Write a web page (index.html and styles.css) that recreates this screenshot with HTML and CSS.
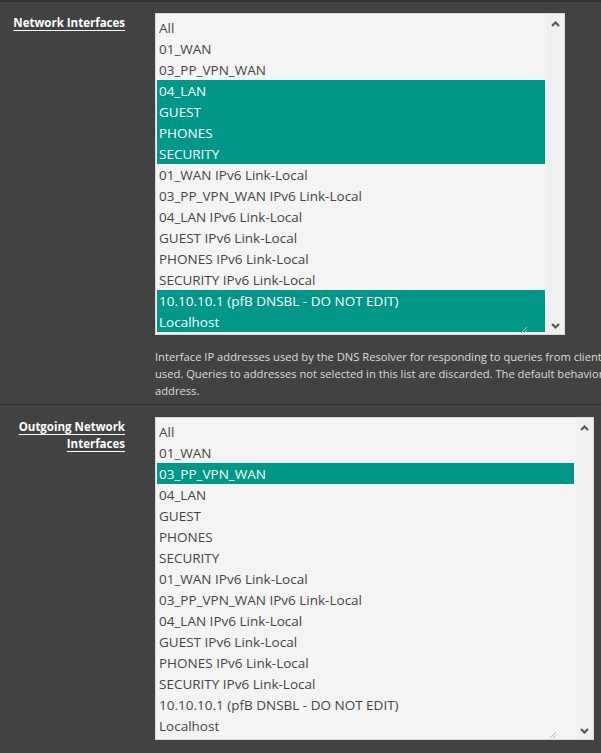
FILE: index.html
```html
<!DOCTYPE html>
<html>
<head>
<meta charset="utf-8">
<link rel="stylesheet" href="styles.css">
</head>
<body>
<div class="page">
  <div class="row row-first">
    <div class="label"><span class="label-text">Network Interfaces</span></div>
    <div class="content">
      <div class="listbox box-a">
        <div class="options">
          <div class="opt">All</div>
          <div class="opt">01_WAN</div>
          <div class="opt">03_PP_VPN_WAN</div>
          <div class="opt sel">04_LAN</div>
          <div class="opt sel">GUEST</div>
          <div class="opt sel">PHONES</div>
          <div class="opt sel">SECURITY</div>
          <div class="opt">01_WAN IPv6 Link-Local</div>
          <div class="opt">03_PP_VPN_WAN IPv6 Link-Local</div>
          <div class="opt">04_LAN IPv6 Link-Local</div>
          <div class="opt">GUEST IPv6 Link-Local</div>
          <div class="opt">PHONES IPv6 Link-Local</div>
          <div class="opt">SECURITY IPv6 Link-Local</div>
          <div class="opt sel">10.10.10.1 (pfB DNSBL - DO NOT EDIT)</div>
          <div class="opt sel">Localhost</div>
        </div>
        <div class="scrollbar">
          <svg class="arrow" width="9" height="6" viewBox="0 0 9 6"><path d="M1 5 L4.5 1.5 L8 5" fill="none" stroke="#555555" stroke-width="2"/></svg>
          <svg class="arrow" width="9" height="6" viewBox="0 0 9 6"><path d="M1 1 L4.5 4.5 L8 1" fill="none" stroke="#555555" stroke-width="2"/></svg>
        </div>
        <svg class="grip" width="8" height="8" viewBox="0 0 8 8"><path d="M7 1 L1 7 M7 4 L4 7 M7 6.5 L6.5 7" stroke="#b8b8b8" stroke-width="1"/></svg>
      </div>
      <div class="help">Interface IP addresses used by the DNS Resolver for responding to queries from clients. If an interface has both IPv4 and IPv6 IPs, both are<br>used. Queries to addresses not selected in this list are discarded. The default behavior is to respond to queries on every available IPv4 and IPv6<br>address.</div>
    </div>
  </div>
  <div class="row row-second">
    <div class="label"><span class="label-text">Outgoing Network</span><br><span class="label-text">Interfaces</span></div>
    <div class="content">
      <div class="listbox box-b">
        <div class="options">
          <div class="opt">All</div>
          <div class="opt">01_WAN</div>
          <div class="opt sel">03_PP_VPN_WAN</div>
          <div class="opt">04_LAN</div>
          <div class="opt">GUEST</div>
          <div class="opt">PHONES</div>
          <div class="opt">SECURITY</div>
          <div class="opt">01_WAN IPv6 Link-Local</div>
          <div class="opt">03_PP_VPN_WAN IPv6 Link-Local</div>
          <div class="opt">04_LAN IPv6 Link-Local</div>
          <div class="opt">GUEST IPv6 Link-Local</div>
          <div class="opt">PHONES IPv6 Link-Local</div>
          <div class="opt">SECURITY IPv6 Link-Local</div>
          <div class="opt">10.10.10.1 (pfB DNSBL - DO NOT EDIT)</div>
          <div class="opt">Localhost</div>
        </div>
        <div class="scrollbar">
          <svg class="arrow" width="9" height="6" viewBox="0 0 9 6"><path d="M1 5 L4.5 1.5 L8 5" fill="none" stroke="#555555" stroke-width="2"/></svg>
          <svg class="arrow" width="9" height="6" viewBox="0 0 9 6"><path d="M1 1 L4.5 4.5 L8 1" fill="none" stroke="#555555" stroke-width="2"/></svg>
        </div>
        <svg class="grip" width="8" height="8" viewBox="0 0 8 8"><path d="M7 1 L1 7 M7 4 L4 7 M7 6.5 L6.5 7" stroke="#b8b8b8" stroke-width="1"/></svg>
      </div>
    </div>
  </div>
</div>
</body>
</html>
```

FILE: styles.css
```css
html, body {
  margin: 0;
  padding: 0;
  overflow: hidden;
  background: #424242;
}
body {
  font-family: "Open Sans", "Noto Sans", sans-serif;
  width: 601px;
  height: 753px;
}
.page {
  border-top: 1px solid #353535;
}
.row {
  display: flex;
  gap: 30px;
  border-top: 1px solid #2f2f2f;
}
.row-first {
  padding: 11px 0 5px 0;
}
.row-second {
  padding: 12px 0 0 0;
}
.label {
  width: 125px;
  flex: none;
  text-align: right;
  font-size: 11.5px;
  font-weight: 700;
  line-height: 17px;
  color: #ffffff;
  padding-top: 1px;
}
.label-text {
  text-decoration: underline;
  text-underline-offset: 3px;
}
.content {
  flex: none;
  white-space: nowrap;
}
.listbox {
  position: relative;
  display: flex;
  background: #f4f4f4;
  border: 1px solid #d8d8d8;
  height: 320px;
}
.box-a { width: 408px; }
.box-b { width: 437px; height: 321px; }
.options {
  flex: 1;
  padding: 3px 1px 0 1px;
  overflow: hidden;
}
.opt {
  height: 21px;
  line-height: 22px;
  font-size: 13.5px;
  color: #444444;
  padding-left: 2px;
}
.opt.sel {
  background: #009688;
  color: #ffffff;
}
.scrollbar {
  width: 17px;
  flex: none;
  margin-left: 1px;
  background: #f0f0f0;
  display: flex;
  flex-direction: column;
  justify-content: space-between;
  align-items: center;
  padding: 7px 0 5px 0;
  box-sizing: border-box;
}
.arrow {
  display: block;
}
.grip {
  position: absolute;
  right: 36px;
  bottom: 0px;
}
.help {
  margin-top: 13px;
  font-size: 11.2px;
  line-height: 17px;
  color: #dcdcdc;
}
```
